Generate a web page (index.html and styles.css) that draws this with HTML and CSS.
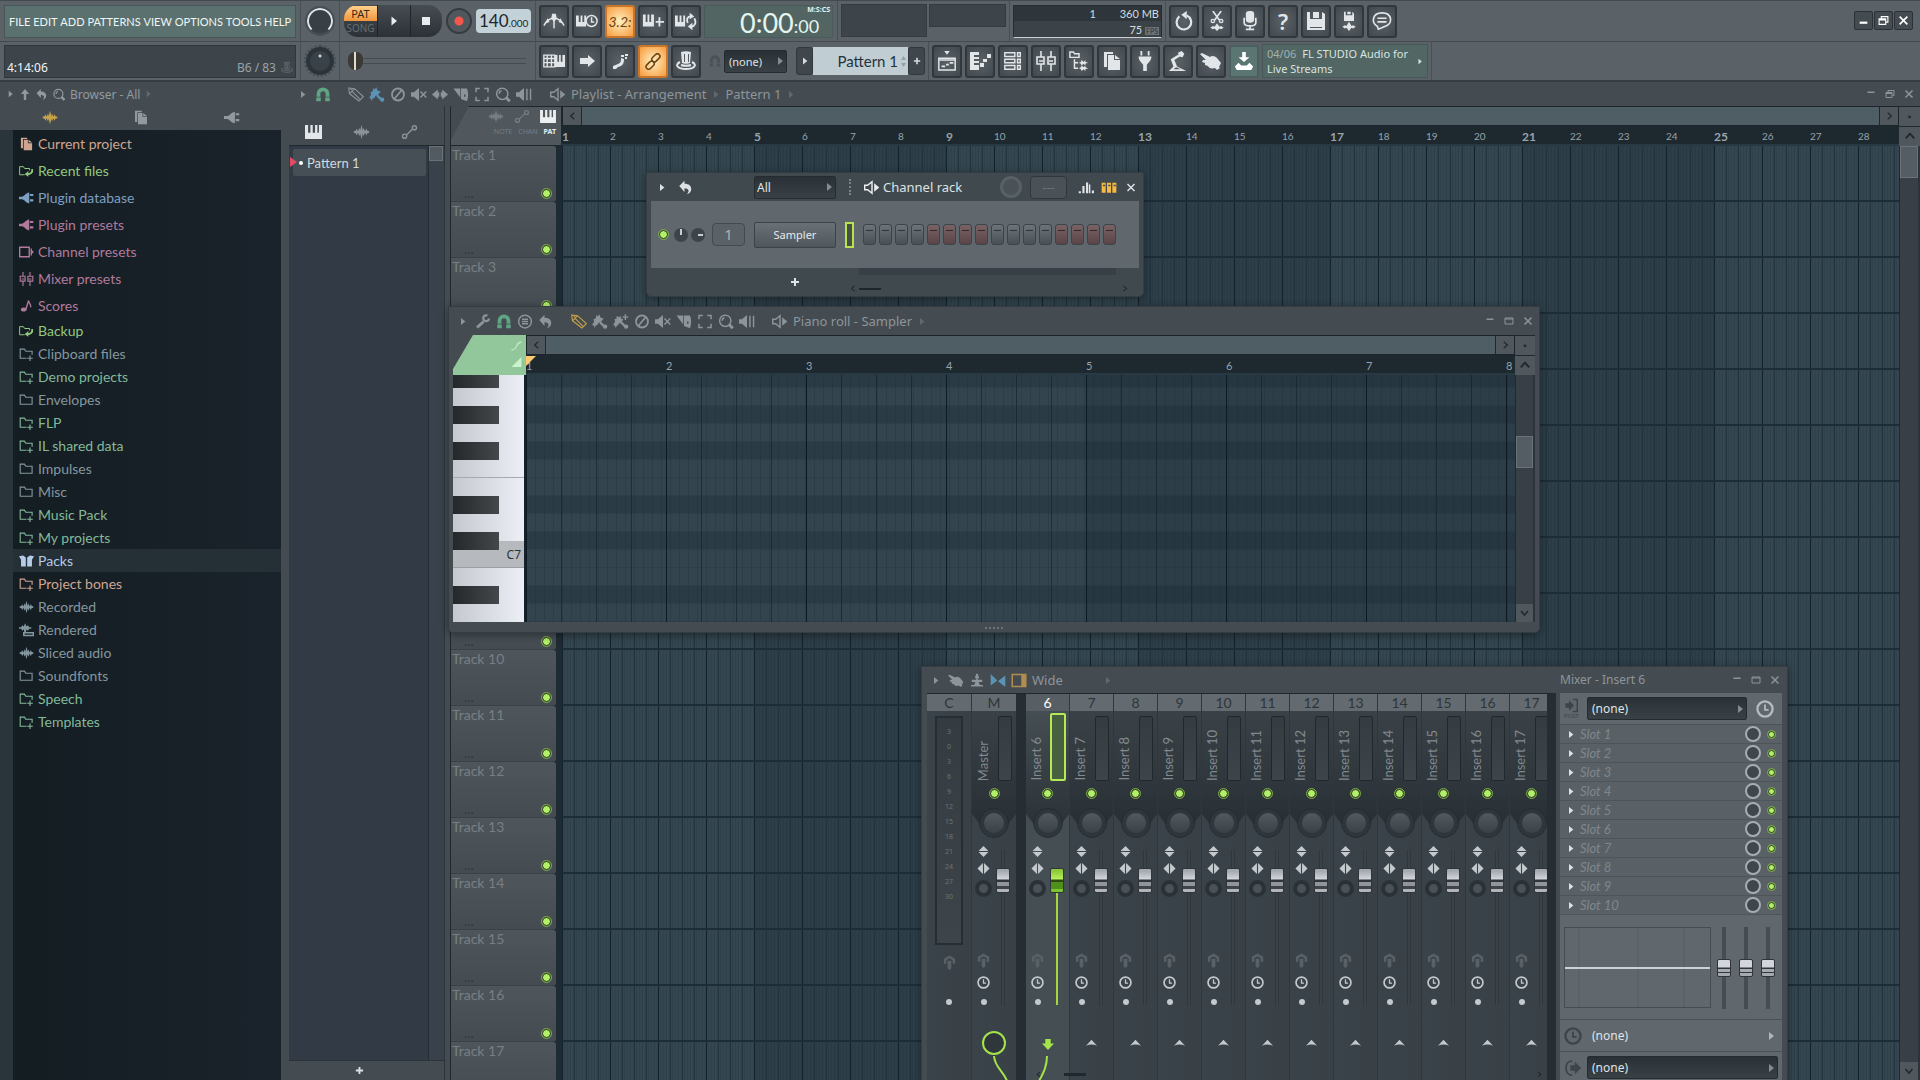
FILE: index.html
```html
<!DOCTYPE html>
<html lang="en">
<head>
    <meta charset="UTF-8">
    <meta name="viewport" content="width=device-width, initial-scale=1.0">
    <title>FL Studio</title>
    <link rel="stylesheet" href="styles.css">
</head>
<body>

    <!-- Icon sprite -->
    <svg class="sprite" aria-hidden="true">
        <symbol id="i-tri" viewBox="0 0 20 20"><path fill="currentColor" d="M5 1l11 9-11 9z"/></symbol>
        <symbol id="i-up" viewBox="0 0 20 20"><path fill="currentColor" d="M10 1l7 8h-5v10H8V9H3z"/></symbol>
        <symbol id="i-undo" viewBox="0 0 20 20"><path fill="currentColor" d="M8 1v4c6 0 9 3 9 7 0 3-2 6-6 7 2-2 3-4 2-6-1-1-2-2-5-2v5L1 8z"/></symbol>
        <symbol id="i-search" viewBox="0 0 20 20"><g fill="none" stroke="currentColor"><circle cx="9" cy="9" r="7.5" stroke-width="2"/><path stroke-width="4" d="M14 14l5 5"/><path stroke-width="2" d="M5 9a4 4 0 0 1 3-4"/></g></symbol>
        <symbol id="i-wave" viewBox="0 0 24 20"><path fill="currentColor" d="M1 9l3-1 1-3 2 4 2-5 1 4 2-8 2 8 1-4 2 5 2-4 1 3 3 1v2l-3 1-1 3-2-4-2 5-1-4-2 8-2-8-1 4-2-5-2 4-1-3-3-1z"/></symbol>
        <symbol id="i-docs" viewBox="0 0 20 20"><path fill="currentColor" d="M2 1h9v2H5v13H2zM6 4h6v5h6v10H6zM13 4l5 4h-5z"/></symbol>
        <symbol id="i-plug" viewBox="0 0 22 20"><path fill="currentColor" d="M0 8h4c4 0 5-5 11-6v16c-6-1-7-6-11-6H0zM16 4h5v3h-5zM16 12h5v3h-5z"/></symbol>
        <symbol id="i-recent" viewBox="0 0 24 20"><path fill="none" stroke="currentColor" stroke-width="1.6" d="M9 16H1V3h6l2 3h8v3"/><path fill="none" stroke="currentColor" stroke-width="3" d="M21 7c1 5-2 8-8 8"/><path fill="currentColor" d="M15 10v9l-6-4z"/></symbol>
        <symbol id="i-channel" viewBox="0 0 22 20"><path fill="none" stroke="currentColor" stroke-width="2" d="M1 3h14v14H1zM18 5v10M20 8v4"/></symbol>
        <symbol id="i-faders" viewBox="0 0 20 20"><path fill="none" stroke="currentColor" stroke-width="1.6" d="M5 0v6M5 13v7M15 0v6M15 13v7M1 6h7v7H1zM12 6h7v7h-7zM3 10h4M13 10h4"/></symbol>
        <symbol id="i-note" viewBox="0 0 20 20"><ellipse fill="currentColor" cx="6" cy="15" rx="4" ry="3"/><path fill="none" stroke="currentColor" stroke-width="2" d="M9 15L13 2c0 4 4 5 3 10"/></symbol>
        <symbol id="i-folder" viewBox="0 0 20 20"><path fill="none" stroke="currentColor" stroke-width="1.6" d="M1 16V3h6l2 3h9v10z"/></symbol>
        <symbol id="i-folderplus" viewBox="0 0 20 20"><path fill="none" stroke="currentColor" stroke-width="1.6" d="M10 16H1V3h6l2 3h9v5M11 16h8M15 12v8"/></symbol>
        <symbol id="i-box" viewBox="0 0 22 20"><path fill="currentColor" d="M0 3l6-1 4 3v13H3V8zM22 3l-6-1-4 3v13h7V8z"/></symbol>
        <symbol id="i-render" viewBox="0 0 22 20"><path fill="currentColor" d="M0 6h3l2-3 2 2 2-5 2 5 2-2 2 3h3v2h-3l-2 3-2-2-1 5H8L7 9l-2 2-2-3H0zM6 13h2v4H6z"/><path fill="none" stroke="currentColor" stroke-width="2" d="M7 14h14v4H7z"/></symbol>
        <symbol id="i-magnet" viewBox="0 0 20 20"><path fill="none" stroke="currentColor" stroke-width="5" d="M4 13V9a6 6 0 0 1 12 0v4"/><path fill="currentColor" d="M1 14h6v5H1zM13 14h6v5h-6z"/></symbol>
        <symbol id="i-pencil" viewBox="0 0 22 20"><path fill="none" stroke="currentColor" stroke-width="1.5" d="M1 1l8 1 12 11-6 6L2 9zM2 9l7-7M6 6l11 11M4 4l2-3"/></symbol>
        <symbol id="i-brush" viewBox="0 0 22 20"><path fill="currentColor" d="M6 1l2 2 2-3 2 5 4 1-3 4-4 2-2 3-2 0-1 4-2-4H0l3-5-1-3 3-1z"/><path fill="none" stroke="currentColor" stroke-width="3" d="M11 11l5 5"/><circle cx="18" cy="17" r="3" fill="currentColor"/></symbol>
        <symbol id="i-brushplus" viewBox="0 0 22 20"><path fill="currentColor" d="M5 2l3 2 2-2 1 4 3 1-2 4-4 2-2 3H5l-1 3-2-4H0l3-5-1-3 3-1zM16 0h2v3h3v2h-3v3h-2V5h-3V3h3z"/><path fill="none" stroke="currentColor" stroke-width="3" d="M11 11l5 5"/><circle cx="18" cy="17" r="3" fill="currentColor"/></symbol>
        <symbol id="i-ban" viewBox="0 0 20 20"><g fill="none" stroke="currentColor" stroke-width="2.4"><circle cx="10" cy="10" r="8"/><path d="M5 16L15 4"/></g></symbol>
        <symbol id="i-mute" viewBox="0 0 22 20"><path fill="currentColor" d="M0 7h4l7-6v18l-7-6H0z"/><path stroke="currentColor" stroke-width="2" d="M13 6l8 8M21 6l-8 8"/></symbol>
        <symbol id="i-swap" viewBox="0 0 22 20"><path fill="currentColor" d="M0 10l8-7v4h2v6H8v4zM22 10l-8-7v4h-2v6h2v4z"/></symbol>
        <symbol id="i-slice" viewBox="0 0 20 20"><path fill="currentColor" fill-rule="evenodd" d="M0 2h9v12zM10 2h8c2 5 2 11 0 17l-8-3zM14 10v3h2v-3z"/></symbol>
        <symbol id="i-select" viewBox="0 0 20 20"><path fill="none" stroke="currentColor" stroke-width="2" d="M2 7V2h5M13 2h5v5M18 13v5h-5M7 18H2v-5"/></symbol>
        <symbol id="i-playback" viewBox="0 0 22 20"><path fill="currentColor" d="M0 7h4l7-6v18l-7-6H0zM14 2h2v16h-2zM19 2h2v16h-2z"/></symbol>
        <symbol id="i-speaker" viewBox="0 0 22 20"><path fill="none" stroke="currentColor" stroke-width="2" d="M1 7h4l6-5v16l-6-5H1z"/><path fill="currentColor" d="M14 4l7 6-7 6z"/></symbol>
        <symbol id="i-piano" viewBox="0 0 22 18"><path fill="currentColor" d="M0 0h4v10h3V0h1v0h2v10h3V0h3v10h2V0h4v18H0z"/></symbol>
        <symbol id="i-auto" viewBox="0 0 22 20"><g fill="none" stroke="currentColor" stroke-width="2"><circle cx="4" cy="16" r="3"/><circle cx="18" cy="4" r="3"/><path d="M7 14l8-8"/></g></symbol>
        <symbol id="i-metro" viewBox="0 0 24 20"><path fill="none" stroke="currentColor" stroke-width="1.6" d="M1 15c3-6 6-8 11-8s8 2 11 8M12 4v14"/><path fill="currentColor" d="M10 2h4l1 5-3 4-3-4zM5 7l2 4-5 2zM19 7l-2 4 5 2z"/></symbol>
        <symbol id="i-pianoclock" viewBox="0 0 24 20"><path fill="currentColor" d="M0 4h3v7h2V4h2v7h2V4h2v12H0z"/><g fill="none" stroke="currentColor" stroke-width="1.6"><circle cx="17" cy="10" r="6"/><path d="M17 6v5h3"/></g></symbol>
        <symbol id="i-pianoplus" viewBox="0 0 24 20"><path fill="currentColor" d="M1 3h3v8h2V3h2v8h2V3h3v13H1zM18 6h2v4h4v2h-4v4h-2v-4h-3v-2h3z"/></symbol>
        <symbol id="i-pianoloop" viewBox="0 0 24 20"><path fill="currentColor" d="M0 4h3v7h2V4h2v7h2V4h2v12H0zM16 1l5 4-5 3zM19 12v8l-5-4z"/><path fill="none" stroke="currentColor" stroke-width="2" d="M14 12c-2-4 0-7 3-7M21 7c3 5 0 9-3 9"/></symbol>
        <symbol id="i-typing" viewBox="0 0 26 20"><path fill="none" stroke="currentColor" stroke-width="1.6" d="M1 3h13v14H1zM1 7h13M1 12h13M5 3v14M10 3v14"/><path fill="currentColor" d="M14 3h3v8h2V3h2v8h2V3h3v14H14z"/></symbol>
        <symbol id="i-arrow" viewBox="0 0 20 20"><path fill="currentColor" d="M3 7h8V4l7 6-7 6v-3H3z"/></symbol>
        <symbol id="i-stepnote" viewBox="0 0 20 20"><path fill="currentColor" d="M3 15l5-2v3l-2 2H3zM8 13c3-1 3-3 3-6l3 1c0 4-1 7-6 8zM11 4h3v2h-3zM15 3h3v2h-3zM15 6h2v2h-2z"/></symbol>
        <symbol id="i-link" viewBox="0 0 20 20"><g fill="none" stroke="currentColor" stroke-width="1.8"><rect x="8" y="3" width="11" height="6" rx="3" transform="rotate(-45 13 6)"/><rect x="1" y="11" width="11" height="6" rx="3" transform="rotate(-45 7 14)"/></g></symbol>
        <symbol id="i-hat" viewBox="0 0 20 20"><path fill="currentColor" fill-rule="evenodd" d="M5 1c3-1 7-1 10 0l-1 11c-2 1-6 1-8 0zM8 3v8h1V3zM12 3v8h1V3z"/><path fill="none" stroke="currentColor" stroke-width="2" d="M4 11c-6 3-2 7 6 7s12-4 6-7M5 14c3 1 7 1 10 0"/></symbol>
        <symbol id="i-playlist" viewBox="0 0 20 22"><path fill="none" stroke="currentColor" stroke-width="1.6" d="M1 8h18v13H1zM1 10h18"/><path fill="currentColor" d="M7 0h6l-3 4zM4 16h4v2H4zM9 14h3v2H9zM13 12h4v2h-4z"/></symbol>
        <symbol id="i-pianoroll" viewBox="0 0 22 20"><path fill="currentColor" d="M1 1h9v3H5v2h5v2H5v2h5v2H5v2h5v5H1zM11 12h4v4h-4zM14 8h4v3h-4zM18 3h4v4h-4z"/></symbol>
        <symbol id="i-rack" viewBox="0 0 20 22"><path fill="none" stroke="currentColor" stroke-width="1.6" d="M1 2h11v4H1zM1 9h11v4H1zM1 16h11v4H1zM15 2h3v4h-3zM15 9h3v4h-3zM15 16h3v4h-3z"/></symbol>
        <symbol id="i-tree" viewBox="0 0 22 22"><path fill="none" stroke="currentColor" stroke-width="1.6" d="M1 7V1h4l1 2h5v4zM6 9v10h4M6 13h4"/><path fill="currentColor" d="M11 13l2-1 1-2 2 2 2-2v2l3 1-3 1v2l-2-2-2 2-1-2zM11 19l2-1 1-2 2 2 2-2v2l3 1-3 1v2l-2-2-2 2-1-2z"/></symbol>
        <symbol id="i-plugv" viewBox="0 0 20 22"><path fill="currentColor" d="M5 0h2v5H5zM13 0h2v5h-2zM3 6h14c0 5-3 6-5 9v7H8v-7c-2-3-5-4-5-9z"/></symbol>
        <symbol id="i-lamp" viewBox="0 0 22 22"><path fill="currentColor" d="M11 2l4-2 3 3-2 4-4-1zM1 22l5-5-3-8 8-5 2 2-6 4 3 7 10 5zM6 20h8l-5-2z"/></symbol>
        <symbol id="i-hand" viewBox="0 0 22 20"><path fill="currentColor" d="M0 3l2-1 8 4c2-2 5-1 7 1l4 5-2 4 1 1-3 2-2-2c-4 1-6 0-7-2l-3-1 0-2-3-1 1-2 3 0z"/></symbol>
        <symbol id="i-download" viewBox="0 0 22 22"><path fill="currentColor" d="M9 1h4v6h4l-6 5-6-5h4zM5 13l3 3h6l3-3 4 4-2 4H3l-2-4z"/></symbol>
        <symbol id="i-refresh" viewBox="0 0 20 22"><path fill="none" stroke="currentColor" stroke-width="2.4" d="M5 6a8 8 0 1 0 8-1"/><path fill="currentColor" d="M13 0v9L7 4z"/></symbol>
        <symbol id="i-scissors" viewBox="0 0 20 24"><path fill="none" stroke="currentColor" stroke-width="2" d="M5 0l8 11M15 0L7 11"/><circle cx="5" cy="12" r="2" fill="none" stroke="currentColor" stroke-width="1.6"/><circle cx="15" cy="12" r="2" fill="none" stroke="currentColor" stroke-width="1.6"/><path fill="currentColor" d="M2 20l3-2 2 1 3-4 3 4 2-1 3 2-3 2-2-1-3 3-3-3-2 1z"/></symbol>
        <symbol id="i-mic" viewBox="0 0 20 24"><rect x="5" y="0" width="10" height="14" rx="4" fill="currentColor"/><path fill="none" stroke="currentColor" stroke-width="2" d="M3 8v6c0 5 14 5 14 0V8M10 17v5M5 22h10"/></symbol>
        <symbol id="i-save" viewBox="0 0 20 20"><path fill="currentColor" fill-rule="evenodd" d="M1 1h3v7h12V1l3 2v16H1zM4 11v6h12v-6zM7 1h6v6H7z"/><path fill="currentColor" d="M4 11h12v5H4z"/></symbol>
        <symbol id="i-saveas" viewBox="0 0 20 24"><path fill="currentColor" d="M4 1h2v4h8V1l2 2v9H4zM8 1h4v3H8zM2 19l3-2 2 1 3-5 3 5 2-1 3 2-3 2-2-1-3 4-3-4-2 1z"/></symbol>
        <symbol id="i-chat" viewBox="0 0 22 22"><path fill="none" stroke="currentColor" stroke-width="1.8" d="M6 17c-7-4-6-15 5-15s13 12 3 15l-7 3zM6 8h10M6 12h10"/></symbol>
        <symbol id="i-min" viewBox="0 0 20 20"><path fill="currentColor" d="M3 12h14v4H3z"/></symbol>
        <symbol id="i-minhi" viewBox="0 0 20 20"><path fill="currentColor" d="M3 5h14v3H3z"/></symbol>
        <symbol id="i-restore" viewBox="0 0 20 20"><path fill="none" stroke="currentColor" stroke-width="2" d="M2 7h12v10H2zM2 9h12M6 6V3h12v10h-3"/></symbol>
        <symbol id="i-max" viewBox="0 0 20 20"><path fill="none" stroke="currentColor" stroke-width="2" d="M2 4h16v12H2zM2 6h16"/></symbol>
        <symbol id="i-close" viewBox="0 0 20 20"><path stroke="currentColor" stroke-width="3" d="M3 3l14 14M17 3L3 17"/></symbol>
        <symbol id="i-wrench" viewBox="0 0 20 20"><path fill="none" stroke="currentColor" stroke-width="4" d="M2 18l9-8"/><path fill="none" stroke="currentColor" stroke-width="3" d="M16 2c-4-1-7 2-5 6 3 3 7 1 7-2"/></symbol>
        <symbol id="i-menu" viewBox="0 0 20 20"><g fill="none" stroke="currentColor" stroke-width="2"><circle cx="10" cy="10" r="8.5"/><path d="M6 7h8M6 10h8M6 13h8"/></g></symbol>
        <symbol id="i-clock" viewBox="0 0 20 20"><g fill="none" stroke="currentColor" stroke-width="2.6"><circle cx="10" cy="10" r="8.4"/><path stroke-width="2" d="M10 5v6h4"/></g></symbol>
        <symbol id="i-input" viewBox="0 0 20 20"><path fill="currentColor" d="M1 7h5V3l7 7-7 7v-4H1z"/><path fill="none" stroke="currentColor" stroke-width="2" d="M11 2h6v16h-6"/></symbol>
        <symbol id="i-output" viewBox="0 0 20 20"><path fill="currentColor" d="M7 7h5V3l7 7-7 7v-4H7z"/><path fill="none" stroke="currentColor" stroke-width="2" d="M9 2C0 2 0 18 9 18"/></symbol>
        <symbol id="i-left" viewBox="0 0 20 20"><path fill="none" stroke="currentColor" stroke-width="3" d="M14 3l-8 7 8 7"/></symbol>
        <symbol id="i-right" viewBox="0 0 20 20"><path fill="none" stroke="currentColor" stroke-width="3" d="M6 3l8 7-8 7"/></symbol>
        <symbol id="i-chup" viewBox="0 0 20 20"><path fill="none" stroke="currentColor" stroke-width="3" d="M3 14l7-8 7 8"/></symbol>
        <symbol id="i-chdown" viewBox="0 0 20 20"><path fill="none" stroke="currentColor" stroke-width="3" d="M3 6l7 8 7-8"/></symbol>
        <symbol id="i-bars" viewBox="0 0 22 20"><path fill="currentColor" d="M1 15h3v3H1zM6 8h3v10H6zM11 3h3v15h-3zM15 6h2v12h-2zM19 14h3v4h-3z"/></symbol>
        <symbol id="i-steps" viewBox="0 0 24 20"><path fill="currentColor" fill-rule="evenodd" d="M1 3h6v15H1zM9 3h6v15H9zM17 3h6v15h-6zM3 6v2h3V6zM11 6v2h3V6zM19 6v2h3V6z"/></symbol>
        <symbol id="i-pole" viewBox="0 0 20 20"><path fill="currentColor" d="M9 1h2l2 6h-2v2h6v3h-5l2 4h4v2H2v-2h4l2-4H3V9h6V7H7z"/></symbol>
        <symbol id="i-multi" viewBox="0 0 22 20"><path fill="currentColor" d="M1 1l9 9-9 7zM21 3v16L11 11z"/></symbol>
        <symbol id="i-dock" viewBox="0 0 20 20"><path fill="none" stroke="currentColor" stroke-width="2" d="M1 2h18v16H1z"/><path fill="currentColor" d="M13 2h6v16h-6z"/></symbol>
        <symbol id="i-updown" viewBox="0 0 20 20"><path fill="currentColor" d="M10 0l9 9H1zM10 20l9-9H1z"/></symbol>
        <symbol id="i-leftright" viewBox="0 0 22 20"><path fill="currentColor" d="M0 10l10-10v20zM22 10l-10-10v20z"/></symbol>
        <symbol id="i-route" viewBox="0 0 20 24"><path fill="none" stroke="currentColor" stroke-width="4" d="M3 14V7l7-4 7 4v7"/><path fill="currentColor" d="M7 9h6v12l-3 3-3-3z"/></symbol>
        <symbol id="i-peak" viewBox="0 0 20 12"><path fill="currentColor" d="M10 0l10 11c-6-3-14-3-20 0z"/></symbol>
        <symbol id="i-send" viewBox="0 0 22 20"><path fill="currentColor" d="M6 0h10v8h6L11 20 0 8h6z"/></symbol>
        <symbol id="i-curve" viewBox="0 0 20 20"><path fill="none" stroke="currentColor" stroke-width="2" d="M1 17c12 1 6-14 18-14"/></symbol>
        <symbol id="i-ramp" viewBox="0 0 20 20"><path fill="currentColor" d="M19 1v18H1z"/></symbol>
        <symbol id="i-plus" viewBox="0 0 20 20"><path fill="currentColor" d="M8 2h4v6h6v4h-6v6H8v-6H2V8h6z"/></symbol>
    </svg>

    <header class="toolbar">
        <div class="bar-row">
            <div class="cell cell-menu">
                <nav class="menu">
                    <button>FILE</button><button>EDIT</button><button>ADD</button><button>PATTERNS</button><button>VIEW</button><button>OPTIONS</button><button>TOOLS</button><button>HELP</button>
                </nav>
            </div>
            <div class="cell cell-knob"><span class="main-knob volume"></span></div>
            <div class="cell cell-transport">
                <div class="transport">
                    <button class="mode"><b>PAT</b><span>SONG</span></button>
                    <button aria-label="Play"><svg><use href="#i-tri"/></svg></button>
                    <button aria-label="Stop"><i class="stop"></i></button>
                </div>
                <button class="record" aria-label="Record"></button>
                <div class="tempo">140<small>.000</small></div>
            </div>
            <div class="cell cell-buttons">
                <button class="tool" aria-label="Metronome"><svg><use href="#i-metro"/></svg></button>
                <button class="tool" aria-label="Wait for input"><svg><use href="#i-pianoclock"/></svg></button>
                <button class="tool on count">3.2:</button>
                <button class="tool" aria-label="Overdub"><svg><use href="#i-pianoplus"/></svg></button>
                <button class="tool" aria-label="Loop record"><svg><use href="#i-pianoloop"/></svg></button>
                <div class="clock"><span>0:00<small>:00</small></span><em>M:S:CS</em></div>
            </div>
            <div class="cell cell-scopes">
                <div class="scope"></div>
                <div class="scope short"></div>
            </div>
            <div class="cell cell-cpu">
                <div class="cpu"><span>1</span><span>360 MB</span><span></span><span>75 <small>FPS</small></span></div>
            </div>
            <div class="cell cell-buttons last">
                <button class="tool" aria-label="Undo"><svg><use href="#i-refresh"/></svg></button>
                <button class="tool" aria-label="Cut"><svg><use href="#i-scissors"/></svg></button>
                <button class="tool" aria-label="Record audio"><svg><use href="#i-mic"/></svg></button>
                <button class="tool help">?</button>
                <button class="tool" aria-label="Save"><svg><use href="#i-save"/></svg></button>
                <button class="tool" aria-label="Render"><svg><use href="#i-saveas"/></svg></button>
                <button class="tool" aria-label="Chat"><svg><use href="#i-chat"/></svg></button>
            </div>
            <div class="window-buttons">
                <button aria-label="Minimize"><svg><use href="#i-min"/></svg></button>
                <button aria-label="Restore"><svg><use href="#i-restore"/></svg></button>
                <button aria-label="Close"><svg><use href="#i-close"/></svg></button>
            </div>
        </div>
        <div class="bar-row">
            <div class="cell cell-menu">
                <div class="hint"><span>4:14:06</span><span class="hint-note">B6 / 83</span><svg><use href="#i-hat"/></svg></div>
            </div>
            <div class="cell cell-knob"><span class="main-knob pitch"></span></div>
            <div class="cell cell-transport">
                <input type="range" class="pitch-slider" aria-label="Song position" value="0">
            </div>
            <div class="cell cell-buttons">
                <button class="tool" aria-label="Typing keyboard"><svg><use href="#i-typing"/></svg></button>
                <button class="tool" aria-label="Step mode"><svg><use href="#i-arrow"/></svg></button>
                <button class="tool" aria-label="Note mode"><svg><use href="#i-stepnote"/></svg></button>
                <button class="tool on" aria-label="Link"><svg><use href="#i-link"/></svg></button>
                <button class="tool" aria-label="Wizard"><svg><use href="#i-hat"/></svg></button>
                <svg class="snap-icon"><use href="#i-magnet"/></svg>
                <select class="drop snap" aria-label="Snap"><option>(none)</option></select>
                <div class="pattern-box">
                    <button aria-label="Pattern menu"><svg><use href="#i-tri"/></svg></button>
                    <input type="text" value="Pattern 1" aria-label="Pattern name">
                    <button aria-label="Add pattern"><svg><use href="#i-plus"/></svg></button>
                </div>
            </div>
            <div class="cell cell-buttons">
                <button class="tool" aria-label="Playlist"><svg><use href="#i-playlist"/></svg></button>
                <button class="tool" aria-label="Piano roll"><svg><use href="#i-pianoroll"/></svg></button>
                <button class="tool" aria-label="Channel rack"><svg><use href="#i-rack"/></svg></button>
                <button class="tool" aria-label="Mixer"><svg><use href="#i-faders"/></svg></button>
                <button class="tool" aria-label="Browser"><svg><use href="#i-tree"/></svg></button>
                <button class="tool" aria-label="Project"><svg><use href="#i-docs"/></svg></button>
                <button class="tool" aria-label="Plugins"><svg><use href="#i-plugv"/></svg></button>
                <button class="tool" aria-label="Tempo tapper"><svg><use href="#i-lamp"/></svg></button>
                <button class="tool" aria-label="Touch"><svg><use href="#i-hand"/></svg></button>
                <button class="tool download" aria-label="Download"><svg><use href="#i-download"/></svg></button>
                <button class="news">
                    <span class="news-text">
                        <span class="news-line"><i>04/06</i><span>FL STUDIO Audio for</span></span>
                        <span class="news-line">Live Streams</span>
                    </span>
                    <svg><use href="#i-tri"/></svg>
                </button>
            </div>
        </div>
    </header>

    <main class="workspace">
        <aside class="browser">
            <div class="browser-head">
                <div class="browser-title">
                    <svg class="s"><use href="#i-tri"/></svg><svg><use href="#i-up"/></svg><svg><use href="#i-undo"/></svg><svg><use href="#i-search"/></svg>
                    <span>Browser - All</span><svg class="s dim"><use href="#i-tri"/></svg>
                </div>
                <div class="browser-tabs">
                    <button class="gold" aria-label="All"><svg><use href="#i-wave"/></svg></button>
                    <button aria-label="Project"><svg><use href="#i-docs"/></svg></button>
                    <button aria-label="Plugins"><svg><use href="#i-plug"/></svg></button>
                </div>
            </div>
            <ul class="browser-list" id="browserList"></ul>
        </aside>

        <section class="arrange">
            <div class="title-row">
                <svg class="s"><use href="#i-tri"/></svg>
                <svg class="green"><use href="#i-magnet"/></svg>
                <div class="tools">
                    <svg><use href="#i-pencil"/></svg><svg class="blue"><use href="#i-brush"/></svg><svg><use href="#i-ban"/></svg><svg><use href="#i-mute"/></svg><svg><use href="#i-swap"/></svg><svg><use href="#i-slice"/></svg><svg><use href="#i-select"/></svg><svg><use href="#i-search"/></svg><svg><use href="#i-playback"/></svg>
                </div>
                <svg class="speaker"><use href="#i-speaker"/></svg>
                <h2>Playlist - Arrangement</h2><svg class="s dim"><use href="#i-tri"/></svg>
                <h2>Pattern 1</h2><svg class="s dim"><use href="#i-tri"/></svg>
                <div class="win-controls">
                    <svg><use href="#i-minhi"/></svg><svg><use href="#i-restore"/></svg><svg><use href="#i-close"/></svg>
                </div>
            </div>
            <div class="arrange-body">
                <div class="picker">
                    <div class="picker-tabs">
                        <button class="active" aria-label="Patterns"><svg><use href="#i-piano"/></svg></button>
                        <button aria-label="Audio"><svg><use href="#i-wave"/></svg></button>
                        <button aria-label="Automation"><svg><use href="#i-auto"/></svg></button>
                    </div>
                    <div class="picker-list">
                        <button class="pattern">Pattern 1</button>
                        <div class="picker-scroll"><span></span></div>
                    </div>
                    <button class="picker-add" aria-label="Add"><svg><use href="#i-plus"/></svg></button>
                </div>
                <div class="playlist">
                    <div class="corner">
                        <div class="corner-icons"><svg><use href="#i-wave"/></svg><svg><use href="#i-auto"/></svg><svg class="active"><use href="#i-piano"/></svg></div>
                        <div class="corner-text"><span>NOTE</span><span>CHAN</span><b>PAT</b></div>
                    </div>
                    <div class="timeline">
                        <div class="hscroll"><button aria-label="Scroll left"><svg><use href="#i-left"/></svg></button><span></span><button aria-label="Scroll right"><svg><use href="#i-right"/></svg></button></div>
                        <ol class="ruler" id="playlistRuler"></ol>
                    </div>
                    <div class="vscroll-top"><span>&#9642;</span><svg><use href="#i-chup"/></svg></div>
                    <div class="tracks" id="tracks"></div>
                    <div class="playlist-grid"></div>
                    <div class="vscroll"><span class="thumb"></span><svg><use href="#i-chdown"/></svg></div>
                </div>
            </div>
        </section>

        <!-- Channel rack -->
        <section class="window channel-rack">
            <div class="rack-head">
                <svg class="s"><use href="#i-tri"/></svg>
                <svg><use href="#i-undo"/></svg>
                <select class="drop" aria-label="Channel filter"><option>All</option></select>
                <i class="grip"></i>
                <svg class="speaker"><use href="#i-speaker"/></svg>
                <h2>Channel rack</h2>
                <span class="swing"></span>
                <span class="lcd">---</span>
                <svg><use href="#i-bars"/></svg>
                <svg class="amber"><use href="#i-steps"/></svg>
                <svg class="s"><use href="#i-close"/></svg>
            </div>
            <div class="rack-body">
                <span class="led"></span><span class="dot-knob"></span><span class="dot-knob side"></span>
                <span class="lcd num">1</span>
                <button class="sampler">Sampler</button>
                <span class="selector"></span>
                <div class="steps" id="steps"></div>
            </div>
            <div class="rack-foot">
                <button aria-label="Add channel"><svg><use href="#i-plus"/></svg></button>
                <div class="rack-scroll"><svg><use href="#i-left"/></svg><span></span><svg class="end"><use href="#i-right"/></svg></div>
            </div>
        </section>

        <!-- Piano roll -->
        <section class="window piano-roll">
            <div class="title-row">
                <svg class="s"><use href="#i-tri"/></svg>
                <div class="tools first"><svg><use href="#i-wrench"/></svg><svg class="green"><use href="#i-magnet"/></svg><svg><use href="#i-menu"/></svg><svg><use href="#i-undo"/></svg></div>
                <div class="tools">
                    <svg class="gold"><use href="#i-pencil"/></svg><svg><use href="#i-brush"/></svg><svg><use href="#i-brushplus"/></svg><svg><use href="#i-ban"/></svg><svg><use href="#i-mute"/></svg><svg><use href="#i-slice"/></svg><svg><use href="#i-select"/></svg><svg><use href="#i-search"/></svg><svg><use href="#i-playback"/></svg>
                </div>
                <svg class="speaker"><use href="#i-speaker"/></svg>
                <h2>Piano roll - Sampler</h2><svg class="s dim"><use href="#i-tri"/></svg>
                <div class="win-controls">
                    <svg><use href="#i-minhi"/></svg><svg><use href="#i-max"/></svg><svg><use href="#i-close"/></svg>
                </div>
            </div>
            <div class="roll">
                <div class="roll-tab"><svg><use href="#i-curve"/></svg><svg><use href="#i-ramp"/></svg></div>
                <div class="timeline">
                    <div class="hscroll"><button aria-label="Scroll left"><svg><use href="#i-left"/></svg></button><span></span><button aria-label="Scroll right"><svg><use href="#i-right"/></svg></button></div>
                    <ol class="ruler wide" id="rollRuler"></ol>
                </div>
                <div class="vscroll-top"><span>&#9642;</span><svg><use href="#i-chup"/></svg></div>
                <div class="keys" id="keys"></div>
                <div class="roll-grid" id="rollGrid"></div>
                <div class="vscroll"><span class="thumb mid"></span><svg><use href="#i-chdown"/></svg></div>
            </div>
            <i class="resize-grip"></i>
        </section>

        <!-- Mixer -->
        <section class="window mixer">
            <div class="mixer-main">
                <div class="title-row">
                    <svg class="s"><use href="#i-tri"/></svg>
                    <div class="tools first"><svg><use href="#i-hand"/></svg><svg><use href="#i-pole"/></svg><svg class="blue"><use href="#i-multi"/></svg><svg class="bronze"><use href="#i-dock"/></svg></div>
                    <h2 class="view-name">Wide</h2><svg class="s dim"><use href="#i-tri"/></svg>
                </div>
                <div class="strips" id="strips"></div>
            </div>
            <div class="fx">
                <div class="title-row">
                    <h2>Mixer - Insert 6</h2>
                    <div class="win-controls">
                        <svg><use href="#i-minhi"/></svg><svg><use href="#i-max"/></svg><svg><use href="#i-close"/></svg>
                    </div>
                </div>
                <div class="fx-row">
                    <div class="post"><svg><use href="#i-input"/></svg><span>POST</span></div>
                    <select class="drop" aria-label="Input"><option>(none)</option></select>
                    <svg class="fx-clock"><use href="#i-clock"/></svg>
                </div>
                <ul class="slots" id="slots"></ul>
                <div class="eq">
                    <div class="eq-view"></div>
                    <div class="eq-faders">
                        <input type="range" aria-label="Low" value="50"><input type="range" aria-label="Mid" value="50"><input type="range" aria-label="High" value="50">
                    </div>
                </div>
                <div class="fx-row">
                    <svg class="dark"><use href="#i-clock"/></svg>
                    <select class="drop plain" aria-label="Delay"><option>(none)</option></select>
                </div>
                <div class="fx-row">
                    <svg class="dark"><use href="#i-output"/></svg>
                    <select class="drop" aria-label="Output"><option>(none)</option></select>
                </div>
            </div>
        </section>
    </main>

    <script src="app.js"></script>
</body>
</html>
```

FILE: styles.css
```css
* { box-sizing: border-box; }
html, body { height: 100%; }
body {
    margin: 0;
    display: flex;
    flex-direction: column;
    overflow: hidden;
    background: #2c3d47;
    color: #d5dbde;
    font-family: "Noto Sans", "Open Sans", sans-serif;
    font-size: 13px;
}
button, input, select {
    font: inherit;
    color: inherit;
    margin: 0;
    padding: 0;
    border: 0;
    background: none;
    border-radius: 0;
}
button { display: flex; align-items: center; justify-content: center; }
ul, ol { margin: 0; padding: 0; list-style: none; }
h2 { margin: 0; font-size: 13px; font-weight: 400; white-space: nowrap; }
svg { width: 16px; height: 15px; flex: none; }
.sprite { position: absolute; width: 0; height: 0; }
.s { width: 8px; height: 9px; }
.dim { opacity: 0.4; }
.green { color: #5fa583; }
.blue { color: #5b93b5; }
.gold { color: #c9a34a; }
.amber { color: #f5b942; }
.bronze { color: #b08d4e; }

/* Toolbar */
.toolbar { flex: none; background: #5a6167; border-top: 1px solid #434b51; }
.bar-row { display: flex; height: 41px; border-bottom: 1px solid #434b51; }
.bar-row + .bar-row { border-bottom: 2px solid #353d43; height: 40px; }
.cell { display: flex; align-items: center; border-right: 1px solid #485056; flex: none; }
.cell-menu { width: 301px; padding: 0 4px; }
.cell-knob { width: 39px; justify-content: center; }
.cell-transport { width: 196px; padding-left: 4px; gap: 4px; }
.cell-buttons { padding: 0 3px; gap: 3px; }
.cell-scopes { width: 172px; gap: 2px; padding: 3px; align-items: flex-start; }
.cell-cpu { width: 156px; padding: 0 3px; }
.last { border-right: 0; }
.menu {
    display: flex;
    flex: 1;
    height: 33px;
    justify-content: space-between;
    padding: 0 4px;
    background: #5b7170;
    border: 1px solid #465556;
    color: #eef6f4;
    font: 11px Lato, sans-serif;
}
.hint {
    display: flex;
    flex: 1;
    height: 33px;
    align-items: flex-end;
    gap: 5px;
    padding: 0 2px 2px;
    background: #3d454b;
    border: 1px solid #2f373c;
    font-size: 12px;
    line-height: 14px;
    color: #f0f3f4;
}
.hint svg { color: #5a6268; width: 12px; }
.hint-note { margin-left: auto; color: #99a2a8; }
.main-knob { width: 28px; height: 28px; border-radius: 50%; background: #384046; border: 4px solid #2d3439; }
.volume { width: 26px; height: 26px; border: 2px solid #dfe6ea; border-bottom-color: #3c444a; outline: 2px solid #474f55; }
.pitch { outline: 2px dotted #444c52; background: radial-gradient(circle at 50% 25%, #c8d0d4 0 1px, #384248 2px); }
.transport { display: flex; height: 32px; width: 98px; border-radius: 14px; overflow: hidden; background: linear-gradient(#464c51, #2b3136); }
.transport button { flex: 1; border-left: 1px solid #1f2529; }
.transport button svg { width: 10px; height: 12px; color: #e8ecee; }
.transport .mode { flex: none; width: 33px; flex-direction: column; font: 11px/15px "Noto Sans", sans-serif; border: 0; color: #656d73; }
.mode b { width: 100%; background: linear-gradient(#ffd08a, #f0953a); color: #3a2a14; font-weight: 400; }
.mode span { font-size: 10px; }
.stop { width: 8px; height: 8px; background: #e8ecee; }
.record { width: 26px; height: 26px; border-radius: 50%; border: 2px solid #353b40; background: radial-gradient(#f5564c 0 4px, #50585e 5px); }
.tempo { width: 55px; height: 24px; border-radius: 4px; padding-left: 3px; background: #c3d2d8; color: #1c262c; font: 17px/24px Lato, sans-serif; }
.tempo small { font-size: 10px; }
.tool {
    width: 30px;
    height: 33px;
    border: 2px solid #30383d;
    border-radius: 3px;
    background: radial-gradient(#5a6268, #41494f);
    color: #e2e6e8;
}
.tool svg { width: 22px; height: 20px; }
.tool.on { background: radial-gradient(#fff0c0, #f79a3c); border-color: #c9762c; color: #6b4213; }
.tool.on svg { width: 18px; height: 17px; }
.tool.download { background: #5b7572; border-color: #49605f; color: #fff; }
.count { font: italic 14px Lato, sans-serif; }
.help { font-size: 22px; font-weight: 600; }
.clock {
    position: relative;
    width: 129px;
    height: 33px;
    margin-right: 1px;
    padding-left: 35px;
    background: #536563;
    border: 1px solid #4a595a;
    color: #e3f6ef;
    font: 27px/33px Lato, sans-serif;
    white-space: nowrap;
}
.clock small { font-size: 18px; }
.clock em { position: absolute; top: 0; right: 2px; font: bold 7px/8px "Noto Sans", sans-serif; }
.scope { width: 86px; height: 33px; background: #3d454b; border: 1px solid #343c42; }
.scope.short { width: 77px; height: 23px; }
.cpu {
    flex: 1;
    display: grid;
    grid-template-columns: 84px 1fr;
    height: 33px;
    background: linear-gradient(#2e363b 15px, #3b4349 15px);
    border: 1px solid #262d32;
    border-bottom-color: #c8ced1;
    font: 11px/16px Lato, sans-serif;
    text-align: right;
}
.cpu span { padding-right: 2px; }
.cpu small { font-size: 7px; background: #6a7278; color: #2e363b; padding: 0 1px; }
.window-buttons { display: flex; gap: 1px; margin: 10px 7px 0 auto; }
.window-buttons button { width: 19px; height: 19px; border: 1px solid #2b3237; border-radius: 2px; background: #444c52; color: #fff; }
.window-buttons svg { width: 11px; height: 11px; }
.snap-icon { width: 12px; height: 12px; color: #4a5258; margin: 0 0 0 5px; }
.drop {
    appearance: none;
    height: 23px;
    padding: 0 4px;
    border: 1px solid #252c30;
    border-radius: 2px;
    font-size: 12px;
    color: #dfe4e6;
    background-image: url("data:image/svg+xml,%3Csvg xmlns='http://www.w3.org/2000/svg' width='5' height='8'%3E%3Cpath fill='%23848c92' d='M0 0l5 4-5 4z'/%3E%3C/svg%3E"), linear-gradient(#2a3136, #394147);
    background-repeat: no-repeat;
    background-position: right 3px center, 0 0;
    background-size: 5px 8px, 100% 100%;
}
.snap { width: 63px; font-size: 11px; }
.pattern-box { display: flex; height: 28px; margin-left: 6px; }
.pattern-box button { width: 17px; background: #3f474d; border: 1px solid #30383d; border-radius: 3px; }
.pattern-box svg { width: 8px; height: 8px; }
.pattern-box input {
    width: 95px;
    padding-right: 10px;
    text-align: right;
    color: #26323a;
    font: 15px Lato, sans-serif;
    background: #c0ced4 url("data:image/svg+xml,%3Csvg xmlns='http://www.w3.org/2000/svg' width='5' height='11'%3E%3Cpath fill='%2393a1a7' d='M0 4l2.500-4 2.500 4zM0 7h5l-2.500 4z'/%3E%3C/svg%3E") no-repeat right 2px center;
}
.news { width: 166px; height: 34px; padding: 0 4px; background: #526664; border: 1px solid #46595a; justify-content: space-between; text-align: left; font-size: 11px; line-height: 15px; color: #d8e4e1; }
.news-line { display: flex; gap: 6px; white-space: nowrap; }
.news i { font-style: normal; color: #9fb3b0; }
.news svg { width: 6px; height: 9px; }
.pitch-slider { appearance: none; width: 184px; height: 20px; background: linear-gradient(#454d53, #454d53) no-repeat 18px 7px / 164px 1px, linear-gradient(#454d53, #454d53) no-repeat 18px 12px / 164px 1px; }
.pitch-slider::-webkit-slider-thumb { appearance: none; width: 15px; height: 18px; margin-left: 4px; border-radius: 7px 7px 8px 8px; background: linear-gradient(90deg, #3c3a36 6px, #e5dcc8 6px 8px, #3c3a36 8px); }

/* Browser */
.workspace { position: relative; flex: 1; display: flex; min-height: 0; }
.browser { display: flex; flex-direction: column; width: 289px; flex: none; border-right: 8px solid #444c52; background: #2a343b; }
.browser-head { height: 48px; background: #444c52; color: #929a9f; }
.browser-title { display: flex; align-items: center; gap: 5px; height: 24px; padding-left: 7px; }
.browser-title svg { height: 13px; width: 12px; }
.browser-title svg.s { width: 7px; height: 8px; }
.browser-title span { font-size: 12px; }
.browser-tabs { display: flex; height: 22px; padding: 0 4px; }
.browser-tabs button { flex: 1; }
.browser-list { flex: 1; margin-left: 13px; background: linear-gradient(90deg, #141d22, #1a232b); font: 14px Lato, sans-serif; }
.browser-list li { height: 23px; }
.browser-list li.tall { height: 27px; }
.browser-list a { display: flex; align-items: center; gap: 4px; height: 100%; padding-left: 6px; color: inherit; text-decoration: none; }
.browser-list svg { width: 15px; height: 14px; }
.browser-list .selected { background: #252f36; }
.c-peach { color: #cfa592; }
.c-lime { color: #93c87f; }
.c-blue { color: #7d9fc2; }
.c-pink { color: #b07a9c; }
.c-grey { color: #84979f; }
.c-mint { color: #83b99b; }
.c-sky { color: #b5cbe8; }

/* Playlist */
.arrange { flex: 1; min-width: 0; display: flex; flex-direction: column; background: #444c52; }
.title-row { display: flex; align-items: center; height: 24px; flex: none; padding: 0 6px 0 10px; color: #8d959a; }
.title-row h2 { padding: 0 6px 1px 5px; }
.arrange .title-row > .green { margin-left: 8px; }
.title-row .tools { display: flex; gap: 5px; margin-left: 17px; }
.title-row .tools.first { margin-left: 8px; }
.title-row .speaker { margin-left: 18px; }
.win-controls { display: flex; gap: 9px; margin-left: auto; }
.win-controls svg { width: 10px; height: 10px; }
.arrange-body { flex: 1; display: flex; min-height: 0; }
.picker { width: 156px; flex: none; display: flex; flex-direction: column; border-right: 1px solid #2c343a; }
.picker-tabs { display: flex; height: 40px; padding-top: 12px; color: #8d959a; border-bottom: 1px solid #20282d; }
.picker-tabs button { width: 48px; }
.picker-tabs .active { color: #e2e6e8; }
.picker-tabs svg { width: 17px; height: 14px; }
.picker-list { flex: 1; display: flex; background: #323b45; }
.pattern { flex: 1; height: 27px; margin: 3px 2px 0 4px; justify-content: flex-start; padding-left: 14px; background: #474f56; border-radius: 2px; color: #d3d9dc; font: 13px Lato, sans-serif; position: relative; }
.pattern::before { content: ""; position: absolute; left: -3px; top: 8px; border: 5px solid transparent; border-left: 7px solid #e04c68; }
.pattern::after { content: ""; position: absolute; left: 6px; top: 12px; width: 4px; height: 4px; border-radius: 50%; background: #fff; }
.picker-scroll { width: 16px; background: #39414b; border-left: 1px solid #252d34; }
.picker-scroll span { display: block; width: 14px; height: 15px; border: 1px solid #6a7278; background: #535b62; }
.picker-add { height: 20px; padding-right: 14px; color: #dde2e4; border-top: 1px solid #2c343a; }
.picker-add svg { width: 9px; height: 9px; }
.playlist {
    flex: 1;
    min-width: 0;
    margin-left: 5px;
    display: grid;
    grid-template-columns: 111px 1fr 21px;
    grid-template-rows: 40px 1fr;
    border-left: 1px solid #20282d;
}
.corner { background: #50585e; border: 1px solid #20282d; border-left: 0; clip-path: polygon(18px 0, 100% 0, 100% 100%, 0 100%, 0 34px); padding: 3px 5px 0 0; color: #757d83; }
.corner-icons, .corner-text { display: flex; justify-content: flex-end; gap: 10px; }
.corner-icons svg { height: 13px; }
.corner-icons .active { color: #eceff0; }
.corner-text { gap: 6px; font-size: 7px; line-height: 10px; margin-top: 4px; }
.corner-text b { color: #e8ecee; }
.timeline { min-width: 0; overflow: hidden; }
.hscroll { display: flex; height: 20px; border: 1px solid #1c252b; background: #4f5d64; }
.hscroll span { flex: 1; }
.hscroll button { width: 19px; background: #50585e; border-right: 1px solid #20282d; color: #232b30; }
.hscroll button:last-child { border-right: 0; border-left: 1px solid #20282d; }
.hscroll svg { width: 9px; height: 10px; }
.ruler { display: flex; height: 20px; overflow: hidden; background: #1d282f; border-bottom: 2px solid #273942; color: #98a4aa; font: 10px/21px Lato, sans-serif; }
.ruler li { position: relative; flex: 0 0 48px; }
.ruler .strong { font-size: 12px; font-weight: 700; }
.ruler.wide li { flex-basis: 140px; font-weight: 400; font-size: 11px; }
.ruler.wide li:first-child::before { content: ""; position: absolute; left: 0; top: 1px; border: 5px solid transparent; border-top-color: #ffca6e; border-left-color: #ffca6e; }
.vscroll-top { display: flex; flex-direction: column; align-items: center; background: #50585e; color: #20282d; border-top: 1px solid #20282d; }
.vscroll-top span { height: 20px; line-height: 18px; font-size: 10px; width: 100%; text-align: center; border-bottom: 1px solid #20282d; }
.vscroll-top svg, .vscroll svg { width: 12px; height: 18px; color: #20282d; }
.vscroll { display: flex; flex-direction: column; align-items: center; justify-content: space-between; background: #383f47; border-left: 1px solid #20282d; border-right: 2px solid #2c343a; }
.vscroll .thumb { width: 100%; height: 32px; background: #555d64; border: 1px solid #6a7278; }
.vscroll svg { background: #50585e; width: 100%; height: 18px; padding: 4px 0; }
.tracks { overflow: hidden; background: #1f2b33; }
.track { display: flex; flex-direction: column; justify-content: space-between; width: 105px; height: 56px; padding: 0 5px 3px 1px; background: linear-gradient(#4e565c, #444c51); border-bottom: 1px solid #394147; border-radius: 0 3px 3px 0; color: #787f84; font: 14px/17px Lato, sans-serif; }
.track div { display: flex; justify-content: space-between; align-items: center; padding-left: 12px; color: #31393e; line-height: 10px; }
.track:last-child div { display: none; }
.led { width: 9px; height: 9px; flex: none; border-radius: 50%; background: #b2f06a; border: 1px solid #2b3a20; outline: 1px solid #7fae49; }
.playlist-grid {
    background:
        repeating-linear-gradient(transparent 0 54px, #1d2d37 54px 56px),
        repeating-linear-gradient(90deg, #12232d 0 1px, transparent 1px 48px),
        repeating-linear-gradient(90deg, transparent 0 12px, #22333d 12px 13px, transparent 13px 24px, #22333d 24px 25px, transparent 25px 36px, #22333d 36px 37px, transparent 37px 48px),
        repeating-linear-gradient(90deg, transparent 0 2px, rgba(20, 35, 45, 0.15) 2px 3px),
        repeating-linear-gradient(90deg, #34464f 0 192px, #2d3e48 192px 384px);
}

/* Floating windows */
.window { position: absolute; background: #444c52; border: 1px solid #353d43; box-shadow: 0 2px 8px rgba(0, 0, 0, 0.4); }
.channel-rack { left: 646px; top: 90px; width: 498px; border-radius: 0 0 5px 5px; background: #40494e; padding: 0 4px; }
.rack-head { display: flex; align-items: center; height: 28px; padding: 0 2px 0 7px; color: #dde2e4; }
.rack-head > svg + svg { margin-left: 12px; }
.rack-head .drop { width: 82px; padding: 0 2px; margin-left: 60px; }
.grip { height: 16px; border-left: 2px dotted #7b8388; margin: 0 13px; }
.rack-head h2 { margin-left: 3px; }
.rack-head .speaker { color: #eceff0; }
.swing { width: 22px; height: 22px; margin-left: auto; border: 3px solid #596167; border-radius: 50%; background: #4a5258; }
.lcd { width: 37px; height: 23px; margin: 0 11px 0 8px; border: 1px solid #30383d; border-radius: 4px; background: #4a5258; color: #6c7479; text-align: center; line-height: 20px; }
.rack-head .amber { margin-left: 7px; }
.rack-head .amber + .s { width: 10px; height: 11px; margin-left: 9px; margin-right: 1px; }
.rack-body { display: flex; align-items: center; height: 67px; padding-left: 8px; background: #60676d; }
.dot-knob { width: 14px; height: 14px; margin-left: 6px; border-radius: 50%; background: linear-gradient(90deg, transparent 6px, #c8ced1 6px 8px, transparent 8px) no-repeat 0 1px / 14px 6px, #3d454b; }
.dot-knob.side { margin-left: 3px; background: linear-gradient(#c8ced1, #c8ced1) no-repeat 7px 6px / 5px 2px, #3d454b; }
.lcd.num { width: 33px; margin: 0 9px 0 7px; background: #5a6167; border-color: #434b51; color: #aab1b5; font-size: 15px; }
.sampler { width: 82px; height: 26px; border: 1px solid #3b4348; border-radius: 2px; background: linear-gradient(#697177, #4f575d); color: #e5e9eb; font-size: 11px; }
.selector { width: 9px; height: 26px; margin: 0 9px 0 9px; border: 2px solid #b8e34e; background: #465046; }
.steps { display: flex; gap: 3px; }
.steps input { appearance: none; width: 13px; height: 21px; border: 1px solid #3d4449; border-radius: 3px; background: linear-gradient(transparent 5px, #2c3338 5px 6px, transparent 6px) no-repeat 2px 0 / 7px 10px, linear-gradient(#6d757a, #484f55); }
.steps .red { background: linear-gradient(transparent 5px, #33282b 5px 6px, transparent 6px) no-repeat 2px 0 / 7px 10px, linear-gradient(#7a6365, #5a4447); }
.rack-foot { display: flex; height: 28px; }
.rack-foot button { width: 60px; margin-left: 114px; color: #dde2e4; }
.rack-foot button svg { width: 10px; height: 10px; }
.rack-scroll { flex: 1; margin: 0 10px 0 24px; display: flex; align-items: flex-end; padding-bottom: 3px; color: #262e33; background: linear-gradient(#393f46, #393f46) no-repeat 10px 0 / 257px 7px; }
.rack-scroll svg { width: 8px; height: 9px; }
.rack-scroll span { width: 22px; height: 2px; margin: 0 0 3px 2px; background: #1e262b; }
.rack-scroll .end { margin-left: auto; }

.piano-roll { left: 448px; right: 380px; top: 224px; border-radius: 0 0 5px 5px; padding: 0 4px; }
.piano-roll .title-row { height: 28px; padding: 0 2px 0 6px; }
.piano-roll .title-row .speaker { margin-left: 17px; }
.roll { display: grid; grid-template-columns: 73px 1fr 20px; grid-template-rows: 40px 247px; }
.roll-tab { display: flex; flex-direction: column; align-items: flex-end; gap: 4px; padding: 5px 4px; background: #92c79b; color: #c9f2cd; clip-path: polygon(20px 0, 100% 0, 100% 100%, 0 100%, 0 34px); }
.roll-tab svg { width: 11px; height: 12px; }
.keys { overflow: hidden; display: flex; flex-direction: column; border-right: 2px solid #16222a; background: linear-gradient(90deg, #c5c9cf, #eceff6); color: #2b3237; font-size: 12px; text-align: right; line-height: 10px; }
.keys > div { flex: none; height: 18px; padding-right: 3px; }
.keys .black { width: 46px; background: linear-gradient(90deg, #25282b, #45484b); }
.keys .split { border-bottom: 1px solid #a5a9b0; }
.keys .c { position: relative; background: #b6babf; border-bottom: 1px solid #9a9ea5; }
.keys .c::before { content: ""; position: absolute; left: 46px; right: 0; bottom: 100%; height: 9px; background: #b6babf; }
.keys > div:first-child, .roll-grid > div:first-child { height: 13px; }
.roll-grid { position: relative; overflow: hidden; background: #33444e; }
.roll-grid > div { height: 18px; border-bottom: 1px solid #2f3f49; }
.roll-grid .black { background: #2b3b45; }
.roll-grid::after {
    content: "";
    position: absolute;
    inset: 0;
    background:
        repeating-linear-gradient(90deg, #0b1a23 0 1px, transparent 1px 140px),
        repeating-linear-gradient(90deg, rgba(20, 35, 45, 0.7) 0 1px, transparent 1px 35px),
        repeating-linear-gradient(90deg, rgba(20, 35, 45, 0.2) 0 1px, transparent 1px 9px),
        linear-gradient(90deg, transparent 560px, rgba(20, 35, 45, 0.2) 560px);
}
.vscroll .mid { margin-top: 61px; }
.resize-grip { display: block; width: 18px; height: 4px; margin: 3px auto; border-bottom: 2px dotted #6b7378; }

/* Mixer */
.mixer { left: 921px; right: 132px; top: 584px; bottom: 0; display: flex; border-bottom: 0; overflow: hidden; padding: 0 5px; }
.mixer .title-row { height: 26px; }
.mixer-main { flex: 1; min-width: 0; }
.mixer-main .title-row { padding-left: 5px; }
.view-name { margin-right: 35px; }
.strips { position: relative; display: flex; height: 390px; overflow: hidden; background: #3a4248; border-right: 9px solid #262e34; border-top: 1px solid #20282d; }
.strip { flex: 0 0 44px; border-right: 1px solid #30383d; background: linear-gradient(90deg, #3b434a, #394147); }
.strip.current { background: #454e53; }
.strip.gap { margin-right: 10px; box-shadow: 10px 0 0 #262e34; border-right: 0; }
.strip-tab { width: 100%; height: 17px; background: #646b70; color: #2d353a; font: 14px Lato, sans-serif; }
.current .strip-tab { background: #575f64; color: #fff; }
.strip-head { position: relative; display: flex; flex-direction: column; align-items: center; height: 130px; }
.strip-head::before { content: ""; position: absolute; inset: 0 0 18px 0; background: linear-gradient(#3a4248, #293035); clip-path: polygon(0 0, 100% 0, 100% 92%, 84% 100%, 16% 100%, 0 92%); }
.current .strip-head::before { background: linear-gradient(#454e53, #2c3338); }
.strip-head > * { position: relative; flex: none; }
.strip-top { display: flex; justify-content: flex-end; align-items: flex-end; width: 100%; height: 70px; padding-right: 4px; gap: 6px; }
.strip-top label { writing-mode: vertical-rl; transform: rotate(180deg); color: #828a8f; font: 13px/17px Lato, sans-serif; }
.strip-meter { width: 14px; height: 65px; border: 1px solid #20282d; background: linear-gradient(#343c41, #3d454b); border-radius: 2px; }
.current .strip-meter { border: 2px solid #b3ea56; background: #47603f; height: 68px; width: 16px; margin: 0 -1px 0 -1px; }
.strip-head .led { margin-top: 8px; }
.pan { width: 28px; height: 28px; margin-top: 11px; border-radius: 50%; border: 4px solid #30373c; outline: 1px solid #252c31; background: linear-gradient(#525a60, #3a4248); }
.strip-body { display: flex; height: 170px; }
.strip-left { width: 23px; padding: 5px 0 0 0; display: flex; flex-direction: column; align-items: center; color: #c3c9cc; }
.strip-left svg { width: 13px; height: 11px; }
.strip-left svg + svg { margin-top: 6px; }
.strip-left .small-knob { width: 17px; height: 17px; margin-top: 6px; flex: none; border: 4px solid #2b3237; border-radius: 50%; background: #4a5258; }
.strip-left .route { height: 15px; margin-top: 56px; color: #596167; }
.strip-left .time { width: 13px; height: 13px; margin-top: 8px; }
.strip-left b { width: 6px; height: 6px; flex: none; margin-top: 10px; border-radius: 50%; background: #c3c9cc; }
.fader { appearance: none; writing-mode: vertical-lr; direction: rtl; width: 14px; height: 155px; margin: 9px 0 0 1px; background: linear-gradient(90deg, #2a3237, #404850 50%, #2a3237) no-repeat center / 4px 100%; }
.current .fader { background: linear-gradient(#a5d63e, #a5d63e) no-repeat center bottom / 2px 115px; }
.fader::-webkit-slider-thumb, .eq-faders input::-webkit-slider-thumb { appearance: none; width: 14px; height: 25px; border: 1px solid #30353a; border-radius: 2px; background: linear-gradient(#a5a9b0 0 2px, #d2d5db 10px, #30353a 11px 13px, #91959b 13px 17px, #3f4449 17px 20px, #b1b5ba 20px); }
.current .fader::-webkit-slider-thumb { background: linear-gradient(#8dc93a 0 2px, #b9f05a 10px, #2c4a12 11px 13px, #4f8f1c 13px 20px, #7cc52f 20px); }
.strip-foot { display: flex; justify-content: center; padding-top: 28px; color: #c3c9cc; }
.strip-foot svg { width: 11px; height: 8px; }
.current .strip-foot svg { color: #a5e34a; width: 12px; height: 11px; }
.send-knob { width: 24px; height: 24px; margin-top: -8px; border: 2px solid #a5e34a; border-radius: 50%; background: #2f373c; }
.peak-scale { width: 28px; height: 229px; margin: 5px 8px 0; padding-top: 6px; border: 2px solid #262e34; font: 7px/15px "Noto Sans", sans-serif; text-align: center; color: #6b7378; background: linear-gradient(#343c42, #3d454b); }
.strip-c .strip-left { width: 100%; padding: 0; }
.strip-c .route { margin-top: 10px; }
.strip-c b { margin-top: 29px; }
.cables { position: absolute; left: 66px; bottom: 0; width: 60px; height: 30px; fill: none; stroke: #a5e34a; stroke-width: 2; }
.mini-scroll { position: absolute; left: 108px; right: 4px; bottom: 4px; display: flex; align-items: center; color: #20282d; }
.mini-scroll svg { width: 7px; height: 9px; }
.mini-scroll span { width: 22px; height: 3px; margin-left: 22px; background: #20282d; }
.mini-scroll svg:last-child { margin-left: auto; }
.fx { width: 222px; flex: none; margin-left: 4px; }
.fx .title-row { padding: 0 2px 0 0; }
.fx .title-row h2 { font-size: 12px; padding-left: 0; }
.fx-row { display: flex; align-items: center; height: 32px; padding: 0 4px; gap: 5px; background: #60676d; border-bottom: 1px solid #4a5258; }
.fx-row .drop { flex: 1; min-width: 0; }
.fx-row .drop + svg { margin: 0 4px; }
.drop.plain { background-color: transparent; border-color: transparent; background-image: url("data:image/svg+xml,%3Csvg xmlns='http://www.w3.org/2000/svg' width='5' height='8'%3E%3Cpath fill='%23b0b7bb' d='M0 0l5 4-5 4z'/%3E%3C/svg%3E"); background-size: 5px 8px; background-position: right 3px center; }
.post { width: 18px; font-size: 6px; line-height: 7px; color: #3d454b; }
.post svg { display: block; }
.fx-clock { width: 18px; height: 18px; color: #b5bbbf; }
.dark { width: 18px; height: 18px; color: #3d454b; }
.slots { background: #596167; }
.slots li { display: flex; align-items: center; height: 19px; padding: 0 7px; border-bottom: 1px solid #4d555b; color: #7f878c; font: italic 13px Lato, sans-serif; }
.slots svg { width: 8px; height: 9px; margin-right: 5px; color: #dde2e4; }
.slot-knob { width: 16px; height: 16px; margin: 0 7px 0 auto; border: 2px solid #a7adb1; border-radius: 50%; background: #3f474d; }
.slots .led { width: 7px; height: 7px; }
.eq { display: flex; height: 105px; padding: 12px 7px 12px 4px; gap: 6px; background: #60676d; border-bottom: 1px solid #4a5258; }
.eq-view { flex: 1; height: 81px; border: 1px solid #454d53; background: linear-gradient(#c9d2d6, #c9d2d6) no-repeat center / 100% 2px, linear-gradient(90deg, transparent 13px, #5b6267 13px 15px, transparent 15px 72px, #5b6267 72px 74px, transparent 74px 118px, #5b6267 118px 120px, transparent 120px); }
.eq-faders { display: flex; width: 58px; justify-content: space-between; }
.eq-faders input { appearance: none; writing-mode: vertical-lr; direction: rtl; width: 14px; height: 82px; background: linear-gradient(#454d53, #454d53) no-repeat center / 4px 100%; }
.eq-faders input::-webkit-slider-thumb { height: 18px; background: linear-gradient(#d2d5db 7px, #30353a 8px 9px, #a5a9b0 9px 12px, #30353a 12px 13px, #a5a9b0 13px); }
```

FILE: app.js
```js
const icon = (name, cls) => `<svg class="${cls || ''}"><use href="#i-${name}"/></svg>`;
const fill = (id, html) => { document.getElementById(id).innerHTML = html; };

// Browser entries: name, icon, colour
const entries = [
    ['Current project', 'docs', 'peach'],
    ['Recent files', 'recent', 'lime'],
    ['Plugin database', 'plug', 'blue'],
    ['Plugin presets', 'plug', 'pink'],
    ['Channel presets', 'channel', 'pink'],
    ['Mixer presets', 'faders', 'pink'],
    ['Scores', 'note', 'pink'],
    ['Backup', 'recent', 'lime'],
    ['Clipboard files', 'folderplus', 'grey'],
    ['Demo projects', 'folderplus', 'mint'],
    ['Envelopes', 'folder', 'grey'],
    ['FLP', 'folderplus', 'mint'],
    ['IL shared data', 'folderplus', 'mint'],
    ['Impulses', 'folder', 'grey'],
    ['Misc', 'folder', 'grey'],
    ['Music Pack', 'folderplus', 'mint'],
    ['My projects', 'folderplus', 'mint'],
    ['Packs', 'box', 'sky'],
    ['Project bones', 'folderplus', 'peach'],
    ['Recorded', 'wave', 'grey'],
    ['Rendered', 'render', 'grey'],
    ['Sliced audio', 'wave', 'grey'],
    ['Soundfonts', 'folder', 'grey'],
    ['Speech', 'folderplus', 'mint'],
    ['Templates', 'folderplus', 'mint']
];
fill('browserList', entries.map(([name, ico, colour], i) =>
    `<li class="c-${colour} ${i < 7 ? 'tall' : ''} ${name === 'Packs' ? 'selected' : ''}"><a href="#">${icon(ico)}${name}</a></li>`
).join(''));

// Rulers
const numbers = (count) => Array.from({ length: count }, (_, i) =>
    `<li class="${i % 4 === 0 ? 'strong' : ''}">${i + 1}</li>`).join('');
fill('playlistRuler', numbers(28));
fill('rollRuler', numbers(8));

// Playlist tracks
fill('tracks', Array.from({ length: 17 }, (_, i) =>
    `<div class="track">Track ${i + 1}<div>...<span class="led"></span></div></div>`).join(''));

// Step sequencer
fill('steps', Array.from({ length: 16 }, (_, i) =>
    `<input type="checkbox" aria-label="Step ${i + 1}" class="${i % 8 > 3 ? 'red' : ''}">`).join(''));

// Piano keys, top to bottom
const keys = ['black', 'white', 'black', 'white', 'black', 'white split', 'white', 'black', 'white', 'black', 'white c', 'white', 'black', 'white'];
fill('keys', keys.map(k => `<div class="${k}">${k === 'white c' ? 'C7' : ''}</div>`).join(''));
fill('rollGrid', keys.map(k => `<div class="${k}"></div>`).join(''));

// Mixer strips
function strip(tab, name, cls) {
    const foot = cls === 'gap' ? '<span class="send-knob"></span>' : icon(cls === 'current' ? 'send' : 'peak');
    return `<div class="strip ${cls}">
        <button class="strip-tab">${tab}</button>
        <div class="strip-head">
            <div class="strip-top"><label for="fader${tab}">${name}</label><span class="strip-meter"></span></div>
            <span class="led"></span><span class="pan"></span>
        </div>
        <div class="strip-body">
            <div class="strip-left">${icon('updown')}${icon('leftright')}<span class="small-knob"></span>${icon('route', 'route')}${icon('clock', 'time')}<b></b></div>
            <input type="range" class="fader" id="fader${tab}" value="86">
        </div>
        <div class="strip-foot">${foot}</div>
    </div>`;
}
const scale = [3, 0, 3, 6, 9, 12, 15, 18, 21, 24, 27, 30].map(n => `<div>${n}</div>`).join('');
let strips = `<div class="strip strip-c"><button class="strip-tab">C</button>
    <div class="peak-scale">${scale}</div>
    <div class="strip-left">${icon('route', 'route')}<b></b></div></div>`;
strips += strip('M', 'Master', 'gap');
for (let i = 6; i <= 17; i++) {
    strips += strip(i, 'Insert ' + i, i === 6 ? 'current' : '');
}
strips += '<svg class="cables" viewBox="0 0 60 30"><path d="M1 3c1 12 9 14 14 27M54 3c0 12-5 19-9 27"/></svg>';
strips += `<div class="mini-scroll">${icon('left')}<span></span>${icon('right')}</div>`;
fill('strips', strips);

// Effect slots
fill('slots', Array.from({ length: 10 }, (_, i) =>
    `<li>${icon('tri')}Slot ${i + 1}<span class="slot-knob"></span><span class="led"></span></li>`).join(''));
```
